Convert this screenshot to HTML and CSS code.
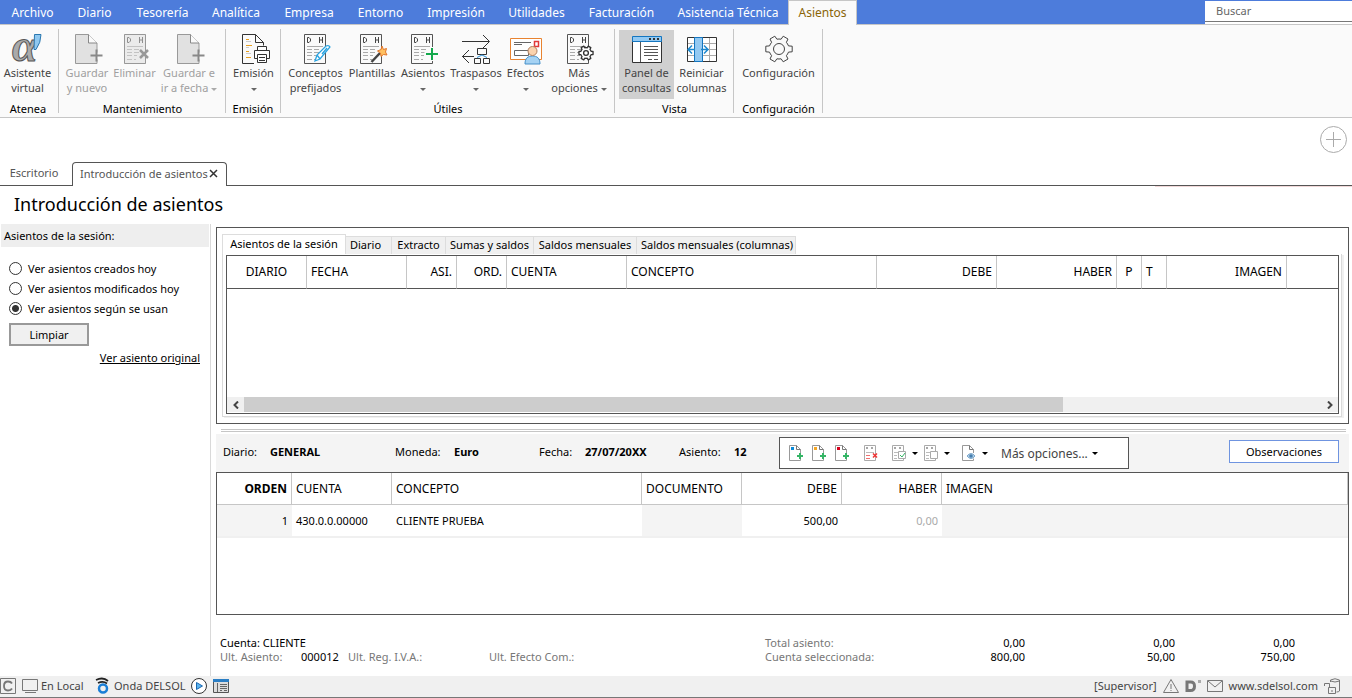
FILE: index.html
```html
<!DOCTYPE html>
<html lang="es">
<head>
<meta charset="utf-8">
<title>Introducción de asientos</title>
<link rel="stylesheet" href="styles.css">
</head>
<body>
<svg class="defs" aria-hidden="true">
  <defs>
    <g id="dh" fill="none">
      <path d="M.5.5h21v29H.5z" fill="#fafafa" stroke="#555"/>
      <path d="M3.5 3.500v5M3.500 3.500h1.500l1.500 1.500v2l-1.500 1.500H3.500M15.500 3v6M18.500 3v6M15.500 6h3" stroke="#444"/>
      <path d="M3 12.500h16M3 15.500h5M3 18.500h5M3 21.500h5M3 25.500h5M10 15.500h5M10 18.500h5M10 21.500h3M10 25.500h2" stroke="#aaa"/>
    </g>
    <g id="doc" fill="none">
      <path d="M22 18.500V9L13.500.5H.5v29H22v-4" fill="#e1e1e1" stroke="#999"/>
      <path d="M13.500.5V9H22" fill="#fafafa" stroke="#888"/>
      <path d="M21.500 15.500v12M15.500 21.500h12" stroke="#888" stroke-width="2"/>
    </g>
    <path id="gear" stroke-linejoin="round" d="M23.500 10.900l3.700.3v5.600l-3.700.3q-.8 2-2.100 3.600L23 24l-4.800 2.800-2.100-3q-2.100.4-4.200 0l-2.100 3L5 24l1.600-3.300q-1.300-1.600-2.100-3.600l-3.700-.3v-5.600l3.700-.3q.8-2 2.100-3.600L5 4l4.800-2.800 2.100 3q2.100-.4 4.200 0l2.100-3L23 4l-1.600 3.300q1.300 1.600 2.100 3.600z"/>
    <g id="sdoc" fill="none">
      <path d="M11.500 8V4.500l-4-4h-7v15h11v-2" fill="#fff" stroke="#999"/>
      <path d="M7.500.5v4h4" stroke="#777"/>
    </g>
    <g id="sgrid" fill="none">
      <path d="M.5.5h11v15H.5z" fill="#fff" stroke="#aaa"/>
      <path d="M2.500 2.500h1v1h-1zM7.500 2.500h1v1h-1z" stroke="#888"/>
      <path d="M2 7.500h8M2 10.500h3M2 13.500h3" stroke="#bbb"/>
    </g>
  </defs>
</svg>

<header>
  <nav class="menu">
    <button>Archivo</button><button>Diario</button><button>Tesorería</button><button>Analítica</button><button>Empresa</button><button>Entorno</button><button>Impresión</button><button>Utilidades</button><button>Facturación</button><button>Asistencia Técnica</button><button class="current">Asientos</button>
    <div class="find"><input class="search" type="text" placeholder="Buscar" aria-label="Buscar"></div>
  </nav>

  <div class="ribbon">
    <section class="group g-atenea">
      <div class="tools">
        <button><svg class="logo" width="32" height="32" viewBox="0 0 32 32"><text x="0" y="28" class="alpha">α</text><path d="M22.500 1.500h6.500q0 8-5 15h-2z" fill="#8fc8f0" stroke="#2b78b0"/></svg><span>Asistente<br>virtual</span></button>
      </div>
      <h2>Atenea</h2>
    </section>
    <section class="group g-mant">
      <div class="tools">
        <button disabled><svg class="sheet" width="28" height="32" viewBox="0 0 28 32"><use href="#doc" y="1"/></svg><span>Guardar<br>y nuevo</span></button>
        <button disabled><svg class="sheet" width="25" height="32" viewBox="0 0 25 32"><path d="M0 1h22v30H0z" fill="#ddd"/><use href="#dh" y="1" opacity=".5"/><path d="M16 17l8 8M24 17l-8 8" stroke="#999" stroke-width="2.500"/></svg><span>Eliminar</span></button>
        <button disabled><svg class="sheet" width="28" height="32" viewBox="0 0 28 32"><use href="#doc" y="1"/></svg><span>Guardar e<br>ir a fecha <i class="caret"></i></span></button>
      </div>
      <h2>Mantenimiento</h2>
    </section>
    <section class="group g-emision">
      <div class="tools">
        <button><svg class="sheet" width="28" height="32" viewBox="0 0 28 32" fill="none"><path d="M12 30.500H.5v-29h13l8 8v3M13.500 1.500v8h8" stroke="#333"/><path d="M4 6.500h3M4 12.500h6M4 18.500h3M4 24.500h5" stroke="#e8a020"/><path d="M4 8.500h5M4 14.500h3M4 20.500h5" stroke="#ccc"/><path d="M12.500 25.500v-8h15v8h-3M15.500 17.500v-4h9v4M15.500 21.500h9v8h-9zM17 24.500h6M17 27.500h6M12.500 25.500h3" stroke="#333" fill="#fff"/></svg><span>Emisión<br><i class="caret"></i></span></button>
      </div>
      <h2>Emisión</h2>
    </section>
    <section class="group g-utiles">
      <div class="tools">
        <button><svg class="sheet" width="28" height="32" viewBox="0 0 28 32"><use href="#dh" y="1"/><path d="M11 28l2-6 9-9q3-1 4 1l-10 12zM13 22l3 4M18 21l5-6" fill="#fff" stroke="#29a3e0" stroke-width="1.300"/></svg><span>Conceptos<br>prefijados</span></button>
        <button><svg class="sheet" width="28" height="32" viewBox="0 0 28 32"><use href="#dh" y="1"/><path d="M11.500 29L20 20" stroke="#444" stroke-width="2.500"/><path d="M22 13l1.500 3.500 3-1-1 3.500 1.500 3-3.500-.5-2.500 2-.5-3.500-3-2 3.500-1.500z" fill="#ffc060" stroke="#e2762b"/></svg><span>Plantillas</span></button>
        <button><svg class="sheet" width="28" height="32" viewBox="0 0 28 32"><use href="#dh" y="1"/><path d="M20.500 14v14M13.500 21h14" stroke="#fafafa" stroke-width="4"/><path d="M21 15v12M15 21h12" stroke="#14a84c" stroke-width="2"/></svg><span>Asientos<br><i class="caret"></i></span></button>
        <button><svg width="30" height="32" viewBox="0 0 30 32" fill="none" stroke="#333"><path d="M1 8.500h27M22 2l6.500 6.500L22 15M13 23.500H1M8 17l-6.500 6.500L8 30"/><path d="M16.500 15.500h9v6h-9zM13.500 25.500h6v5h-6zM22.500 25.500h6v5h-6z" fill="#fafafa"/><path d="M16 24.500l5-2.500 5 2.500" stroke="#2b8fd6"/></svg><span>Traspasos<br><i class="caret"></i></span></button>
        <button><svg width="32" height="32" viewBox="0 0 32 32" fill="none"><path d="M.5 5.500h31v21H.5z" fill="#fff" stroke="#e88330"/><path d="M4 9.500h17M4 11.500h8M4.500 17.500h14v5h-14z" stroke="#666"/><path d="M24.500 8.500h4v5h-4z" stroke="#e23838" stroke-width="1.500"/><path d="M15 31c0-6 3-8 7.500-8s7.500 2 7.500 8z" fill="#a5d2f3" stroke="#4690c8"/><circle cx="22.500" cy="18" r="4.500" fill="#fbd3ae" stroke="#b08060"/></svg><span>Efectos<br><i class="caret"></i></span></button>
        <button><svg class="sheet" width="28" height="32" viewBox="0 0 28 32"><use href="#dh" y="1"/><svg x="11" y="12" width="16" height="16" viewBox="-1 -1 30 30"><use href="#gear" fill="#fff" stroke="#333" stroke-width="2.500"/><circle cx="14" cy="14" r="4.500" fill="none" stroke="#333" stroke-width="2.500"/></svg></svg><span>Más<br>opciones <i class="caret"></i></span></button>
      </div>
      <h2>Útiles</h2>
    </section>
    <section class="group g-vista">
      <div class="tools">
        <button class="pressed"><svg width="30" height="32" viewBox="0 0 30 32" fill="none"><path d="M.5 4.500h29v25H.5z" fill="#fff" stroke="#333"/><path d="M.5 3.500h29v5H.5z" fill="#93c9f2" stroke="#1476c0"/><path d="M17 6h2M21 6h2M25 6h2" stroke="#333" stroke-width="2"/><path d="M8.500 9v20M12 13.500h14M12 16.500h14M12 19.500h14M12 22.500h14M16 26.500h4M22 26.500h4" stroke="#555"/></svg><span>Panel de<br>consultas</span></button>
        <button><svg width="30" height="32" viewBox="0 0 30 32" fill="none"><path d="M.5 4.500h29v24H.5z" fill="#fff"/><path d="M1 10.500h28M1 16.500h28M1 22.500h28M22.500 4v24" stroke="#aaa"/><path d="M.5 4.500h29v24H.5z" stroke="#333"/><path d="M7.500 4.500h8v24h-8z" fill="#93c9f2" stroke="#1476c0"/><path d="M2 16.500h6M5 12.500l-4 4 4 4M14 16.500h7M17 12.500l4 4-4 4" stroke="#1c87cd" stroke-width="1.500"/></svg><span>Reiniciar<br>columnas</span></button>
      </div>
      <h2>Vista</h2>
    </section>
    <section class="group g-conf">
      <div class="tools">
        <button><svg width="28" height="32" viewBox="0 0 28 32" fill="none" stroke="#444"><use href="#gear" y="2"/><circle cx="14" cy="16" r="5.500"/></svg><span>Configuración</span></button>
      </div>
      <h2>Configuración</h2>
    </section>
  </div>
</header>

<div class="desktop">
  <button class="add" aria-label="Añadir"><svg width="27" height="27" viewBox="0 0 27 27" fill="none" stroke="#aaa"><circle cx="13.500" cy="13.500" r="13"/><path d="M13.500 6v15M6 13.500h15"/></svg></button>
</div>
<nav class="windows">
  <button>Escritorio</button>
  <button class="current">Introducción de asientos <svg width="9" height="9" viewBox="0 0 9 9" stroke="#333" stroke-width="1.500"><path d="M1 1l7 7M8 1L1 8"/></svg></button>
  <span class="rest"></span><span class="rest accent"></span>
</nav>
<h1>Introducción de asientos</h1>

<div class="work">
  <aside>
    <h3>Asientos de la sesión:</h3>
    <div class="choices">
      <label><input type="radio" name="ver">Ver asientos creados hoy</label>
      <label><input type="radio" name="ver">Ver asientos modificados hoy</label>
      <label><input type="radio" name="ver" checked>Ver asientos según se usan</label>
    </div>
    <button class="clear">Limpiar</button>
    <a href="#original">Ver asiento original</a>
  </aside>

  <main>
    <section class="session">
      <nav class="subtabs">
        <button class="current">Asientos de la sesión</button><button>Diario</button><button>Extracto</button><button>Sumas y saldos</button><button>Saldos mensuales</button><button>Saldos mensuales (columnas)</button>
      </nav>
      <div class="frame">
        <div class="listing">
          <table>
            <colgroup><col class="w80"><col class="w100"><col class="w50"><col class="w50"><col class="w120"><col class="w250"><col class="w120"><col class="w120"><col class="w25"><col class="w25"><col class="w120"><col></colgroup>
            <thead><tr><th class="mid">DIARIO</th><th>FECHA</th><th class="num">ASI.</th><th class="num">ORD.</th><th>CUENTA</th><th>CONCEPTO</th><th class="num">DEBE</th><th class="num">HABER</th><th class="mid">P</th><th>T</th><th class="num">IMAGEN</th><th></th></tr></thead>
          </table>
          <div class="scroll">
            <button aria-label="Izquierda"><svg width="6" height="8" viewBox="0 0 6 8" fill="none" stroke="#444" stroke-width="2"><path d="M5 .5L1.500 4 5 7.500"/></svg></button>
            <div class="track"><div class="thumb"></div></div>
            <button aria-label="Derecha"><svg width="6" height="8" viewBox="0 0 6 8" fill="none" stroke="#444" stroke-width="2"><path d="M1 .5L4.500 4 1 7.500"/></svg></button>
          </div>
        </div>
      </div>
    </section>
    <div class="splitter"></div>

    <section class="entry">
      <div class="bar">
        <dl>
          <dt>Diario:</dt><dd>GENERAL</dd>
          <dt>Moneda:</dt><dd>Euro</dd>
          <dt>Fecha:</dt><dd>27/07/20XX</dd>
          <dt>Asiento:</dt><dd>12</dd>
        </dl>
        <div class="actions">
          <button aria-label="Nuevo apunte"><svg width="16" height="16" viewBox="0 0 16 16"><use href="#sdoc"/><path d="M2 2h3v3H2z" fill="#0a8ad8"/><path d="M11 8v6M8 11h6" stroke="#35b566" stroke-width="2"/></svg></button>
          <button aria-label="Insertar apunte"><svg width="16" height="16" viewBox="0 0 16 16"><use href="#sdoc"/><path d="M2 2h3v3H2z" fill="#f5a623"/><path d="M11 8v6M8 11h6" stroke="#35b566" stroke-width="2"/></svg></button>
          <button aria-label="Duplicar apunte"><svg width="16" height="16" viewBox="0 0 16 16"><use href="#sdoc"/><path d="M2 2h3v3H2z" fill="#d8001c"/><path d="M11 8v6M8 11h6" stroke="#35b566" stroke-width="2"/></svg></button>
          <button class="a-del" aria-label="Eliminar apunte"><svg width="16" height="16" viewBox="0 0 16 16"><use href="#sgrid"/><path d="M2 10.500h4M2 13.500h4" stroke="#f07070"/><path d="M9 8.500l4 4M13 8.500l-4 4" stroke="#e33" stroke-width="1.500"/></svg></button>
          <button class="a-wide" aria-label="Marcar"><svg width="16" height="16" viewBox="0 0 16 16"><use href="#sgrid"/><path d="M6.500 6.500h7v7h-7z" fill="#fff" stroke="#aaa"/><path d="M8 10l2 2 3-4" fill="none" stroke="#35b566"/></svg><i class="caret"></i></button>
          <button class="a-wide" aria-label="Desmarcar"><svg width="16" height="16" viewBox="0 0 16 16"><use href="#sgrid"/><path d="M6.500 6.500h7v7h-7z" fill="#fff" stroke="#aaa"/></svg><i class="caret"></i></button>
          <button class="a-view" aria-label="Ver documento"><svg width="16" height="16" viewBox="0 0 16 16"><use href="#sdoc"/><path d="M5 11q4-5 8 0-4 5-8 0z" fill="#b7d3ea" stroke="#7ba7cc"/><circle cx="9" cy="11" r="1.800" fill="#477eae"/></svg><i class="caret"></i></button>
          <button class="a-more">Más opciones... <i class="caret"></i></button>
        </div>
        <button class="notes">Observaciones</button>
      </div>
      <div class="lines">
        <table>
          <colgroup><col class="w75"><col class="w100"><col class="w250"><col class="w100"><col class="w100"><col class="w100"><col></colgroup>
          <thead><tr><th class="num strong">ORDEN</th><th>CUENTA</th><th>CONCEPTO</th><th>DOCUMENTO</th><th class="num">DEBE</th><th class="num">HABER</th><th>IMAGEN</th></tr></thead>
          <tbody><tr><td class="num off">1</td><td>430.0.0.00000</td><td>CLIENTE PRUEBA</td><td class="off"></td><td class="num">500,00</td><td class="num zero">0,00</td><td class="off"></td></tr></tbody>
        </table>
      </div>
    </section>

    <section class="totals">
      <div class="account">
        <p>Cuenta: CLIENTE</p>
        <p class="last"><span>Ult. Asiento:</span><b>000012</b><span>Ult. Reg. I.V.A.:</span><span>Ult. Efecto Com.:</span></p>
      </div>
      <table>
        <tbody>
          <tr><th>Total asiento:</th><td>0,00</td><td>0,00</td><td>0,00</td></tr>
          <tr><th>Cuenta seleccionada:</th><td>800,00</td><td>50,00</td><td>750,00</td></tr>
        </tbody>
      </table>
    </section>
  </main>
</div>

<footer>
  <div class="side">
    <svg width="16" height="16" viewBox="0 0 16 16" fill="none"><path d="M.5.5h15v15H.5z" stroke="#777"/><path d="M12 5.500q-1-2-4-2-4 0-4 4.500t4 4.500q3 0 4-2" stroke="#777" stroke-width="1.800"/></svg>
    <svg class="s-screen" width="16" height="16" viewBox="0 0 16 16" fill="none" stroke="#777"><path d="M.5 1.500h15v11H.5zM3 14.500h11"/></svg>
    <span class="s-local">En Local</span>
    <svg width="16" height="17" viewBox="0 0 16 17" fill="none"><path d="M1 3q7-3.500 12 1M3 6q5-2.500 9 .5" stroke="#222" stroke-width="1.800"/><circle cx="8" cy="11.500" r="4" stroke="#1b7fd6" stroke-width="2.500"/></svg>
    <span class="s-onda">Onda DELSOL</span>
    <svg width="16" height="16" viewBox="0 0 16 16"><circle cx="8" cy="8" r="7.500" fill="#fff" stroke="#333"/><path d="M5.500 4.500l6 3.500-6 3.500z" fill="#5bb3ee" stroke="#1b68b0"/></svg>
    <svg class="s-panel" width="16" height="16" viewBox="0 0 16 16" fill="none"><path d="M.5 2.500h15v12H.5z" fill="#ddd" stroke="#555"/><path d="M0 1h16v3H0z" fill="#2b7ec4"/><path d="M4.500 5v9M7 6.500h7M7 8.500h7M7 10.500h7M7 12.500h2M11 12.500h3" stroke="#666"/></svg>
  </div>
  <div class="side">
    <span>[Supervisor]</span>
    <svg class="f-gap" width="16" height="16" viewBox="0 0 16 16" fill="none" stroke="#777"><path d="M8 1.500L15.500 14.500H.5zM8 6v5M8 12v1"/></svg>
    <svg class="f-gap" width="16" height="16" viewBox="0 0 16 16" fill="none"><path d="M2 4v8.500h3.500q4 0 4-4.300T5.500 4z" stroke="#777" stroke-width="3"/><path d="M13 2h3v3h-3z" fill="#aaa"/></svg>
    <svg class="f-gap" width="16" height="16" viewBox="0 0 16 16" fill="none" stroke="#777"><path d="M.5 2.500h15v11H.5zM1 3l7 6 7-6"/></svg>
    <a class="f-gap" href="#web">www.sdelsol.com</a>
    <svg class="f-gap" width="16" height="16" viewBox="0 0 16 16" fill="none" stroke="#777"><path d="M6.500 4V2q4.500-2.500 9 0v11q-1 1-3 1M6.500 3q4.500 2 9 0M4.500 9.500h7v6h-7zM.5 8V5.500h5v4M8 12v2"/></svg>
  </div>
</footer>
</body>
</html>
```
FILE: styles.css
```css
* { box-sizing: border-box; }

body {
  margin: 0;
  min-height: 100vh;
  display: flex;
  flex-direction: column;
  background: #fff;
  color: #000;
  font-family: "Noto Sans", "Open Sans", sans-serif;
  font-size: 11px;
  line-height: 15px;
}

button, input {
  margin: 0;
  padding: 0;
  border: 0;
  background: none;
  color: inherit;
  font: inherit;
  white-space: nowrap;
}

h1, h2, h3, p, dl, dd { margin: 0; font-weight: 400; }
svg { display: block; flex: none; }
a { color: inherit; }
table { border-collapse: separate; border-spacing: 0; }
.defs { position: absolute; width: 0; height: 0; }

.caret {
  display: inline-block;
  vertical-align: middle;
  border: 3px solid transparent;
  border-top-color: currentColor;
  border-bottom: 0;
}

/* Menu bar */
.menu {
  display: grid;
  grid-template-columns: 62px 62px 74px 73px 73px 70px 81px 80px 90px 123px 69px 1fr;
  height: 25px;
  background: #4d7cdb;
  border-bottom: 1px solid #c6c6c6;
  color: #fff;
  font-size: 12px;
}
.menu button { padding-left: 3px; }
.menu .current {
  height: 25px;
  padding: 0 0 1px;
  border: 1px solid #c6c6c6;
  border-bottom: 0;
  background: #fafafa;
  color: #8a6508;
}
.find {
  justify-self: end;
  width: 147px;
  height: 24px;
  border-top: 1px solid #4d7cdb;
  background: #fff;
}
.search {
  display: block;
  width: 100%;
  height: 21px;
  padding: 0 11px 2px;
  border-bottom: 1px solid #777;
  font-size: 11px;
}
.search::placeholder { color: #666; opacity: 1; }

/* Ribbon */
.ribbon {
  display: flex;
  height: 93px;
  padding: 4px 0;
  background: #fafafa;
  border-bottom: 1px solid #c6c6c6;
}
.group {
  display: flex;
  flex-direction: column;
  justify-content: space-between;
  padding-left: 3px;
  border-right: 1px solid #c6c6c6;
}
.tools { display: flex; height: 70px; padding-top: 1px; }
.tools button {
  display: flex;
  flex-direction: column;
  align-items: center;
  padding-top: 3px;
  color: #444;
}
.tools button:disabled { color: #a0a0a0; }
.tools .pressed { background: #d0d0d0; }
.tools .caret { border-top-color: #666; }
.tools :disabled .caret { border-top-color: #aaa; }
.sheet { margin-left: 4px; }
.group h2 { margin-right: 2px; font-size: 11px; line-height: 8px; text-align: center; }
.g-atenea { width: 59px; padding-left: 0; }
.g-atenea button { width: 55px; }
.g-mant { width: 167px; }
.g-mant button { width: 64px; }
.g-mant button:first-child { width: 50px; }
.g-mant button:nth-child(2) { width: 45px; }
.g-emision { width: 55px; padding-left: 2px; }
.g-emision button { width: 51px; }
.g-utiles { width: 334px; }
.g-utiles .tools { display: grid; grid-template-columns: 63px 50px 52px 54px 45px 62px; }
.g-vista { width: 119px; }
.g-vista .tools { padding-left: 1px; }
.g-vista button { width: 55px; }
.g-conf { width: 89px; }
.g-conf button { width: 83px; }
.logo { overflow: visible; }
.alpha { font: italic 700 46px "Liberation Serif", serif; fill: #aaa; stroke: #555; }

/* Window tabs */
.desktop { display: flex; justify-content: flex-end; height: 44px; padding: 8px 5px; }
.add { width: 27px; height: 27px; }
.windows { display: flex; height: 24px; color: #555; }
.windows button { width: 72px; padding: 0 4px 2px 0; border-bottom: 1px solid #555; }
.windows .current {
  display: flex;
  align-items: center;
  justify-content: space-between;
  width: 155px;
  padding: 0 8px 3px 7px;
  border: 1px solid #555;
  border-bottom: 0;
  border-radius: 4px 4px 0 0;
}
.rest { flex: 1; border-bottom: 1px solid #555; }
.windows .accent { flex: 0 0 197px; box-shadow: 0 1px #f0d8d8; }
h1 { padding: 4px 14px 6px; font-size: 18px; line-height: 28px; }

/* Work area */
.work { flex: 1; display: flex; }
aside {
  display: flex;
  flex-direction: column;
  flex: none;
  width: 211px;
  border-right: 1px solid #d9d9d9;
  padding-right: 1px;
}
h3 { margin-left: 1px; padding: 4px 3px; background: #eee; font-size: 11px; }
.choices { display: grid; gap: 5px; padding: 14px 9px 0; }
.choices label { display: flex; align-items: center; gap: 6px; }
.choices input {
  appearance: none;
  width: 13px;
  height: 13px;
  border: 1px solid #333;
  border-radius: 50%;
  background: #fff;
}
.choices input:checked { background: radial-gradient(circle, #333 3px, #fff 4px); }
.clear {
  width: 80px;
  height: 23px;
  margin: 7px 9px 4px;
  border: 2px solid #999;
  background: #f0f0f0;
}
aside a { align-self: flex-end; margin-right: 9px; }

main { flex: 1; min-width: 0; display: flex; flex-direction: column; padding: 3px 3px 0 5px; }
.session { padding: 6px 6px 6px 5px; border: 1px solid #555; }
.subtabs { display: flex; align-items: flex-end; height: 20px; }
.subtabs button {
  height: 18px;
  padding: 0 4px 2px;
  background: #f0f0f0;
  border: 1px solid #ddd;
  border-left: 0;
  border-bottom: 0;
}
.subtabs button:nth-child(1) { height: 20px; width: 124px; padding-bottom: 3px; background: #fff; border-left: 1px solid #ddd; }
.subtabs button:nth-child(2) { width: 46px; text-align: left; }
.subtabs button:nth-child(3) { width: 54px; }
.subtabs button:nth-child(4) { width: 88px; }
.subtabs button:nth-child(5) { width: 103px; }
.subtabs button:nth-child(6) { width: 159px; }
.frame { padding: 1px 2px 2px 3px; border: 1px solid #d9d9d9; border-top: 0; box-shadow: 2px 1px #f0f0f0; }
.listing {
  display: flex;
  flex-direction: column;
  justify-content: space-between;
  height: 159px;
  padding-bottom: 1px;
  border: 1px solid #555;
}

main table { table-layout: fixed; width: 100%; }
th, td { padding: 0 4px; text-align: left; font-weight: 400; white-space: nowrap; }
thead th { height: 32px; border-right: 1px solid #c6c6c6; border-bottom: 1px solid #c6c6c6; font-size: 12px; }
.listing th { height: 33px; padding-bottom: 2px; border-bottom-color: #555; }
.listing th:last-child { border-right: 0; }
main .num { text-align: right; }
main .mid { text-align: center; }
main .strong { font-weight: 700; }
.w25 { width: 25px; }
.w50 { width: 50px; }
.w75 { width: 75px; }
.w80 { width: 80px; }
.w100 { width: 100px; }
.w120 { width: 120px; }
.w250 { width: 250px; }

.scroll { display: flex; height: 15px; background: #f0f0f0; }
.scroll button { display: grid; place-items: center; width: 17px; }
.track { flex: 1; }
.thumb { width: 76%; height: 15px; background: #cdcdcd; }
.splitter { height: 3px; margin: 5px 3px 2px 5px; border: 1px solid #c6c6c6; border-width: 1px 0; }

/* Entry */
.bar {
  display: flex;
  align-items: flex-start;
  height: 38px;
  padding: 3px 10px 0 0;
  background: #f4f4f4;
}
dl {
  display: grid;
  grid-template-columns: 47px 125px 59px 85px 46px 94px 55px 45px;
  margin-top: 7px;
  padding-left: 7px;
}
dd { font-weight: 700; }
.actions {
  display: flex;
  align-items: center;
  width: 350px;
  height: 32px;
  padding-left: 9px;
  border: 1px solid #555;
  background: #fff;
}
.actions button { display: flex; align-items: center; gap: 4px; width: 23px; color: #000; }
.actions .a-del { width: 28px; margin-left: 6px; }
.actions .a-wide { width: 32px; }
.actions .a-view { width: 39px; margin-left: 6px; }
.actions .a-more { width: auto; color: #444; font-size: 12px; }
.actions .caret { border-top-color: #000; }
.notes { width: 110px; height: 23px; margin: 3px 0 0 auto; border: 1px solid #6f94e0; background: #fff; }
.lines { height: 143px; border: 1px solid #555; }
tbody td { height: 33px; border-bottom: 2px solid #f0f0f0; }
.off { background: #f4f4f4; }
.zero { color: #aaa; }

/* Totals */
.totals { display: flex; padding: 21px 0 0 4px; line-height: 14px; }
.account { width: 545px; }
.last { display: grid; grid-template-columns: 81px 47px 141px 1fr; color: #777; }
.last b { color: #000; font-weight: 400; }
.totals table { width: 530px; }
.totals th, .totals td { height: 14px; padding: 0; border: 0; }
.totals th { width: 160px; color: #777; }
.totals td { text-align: right; }
.totals td:nth-child(2) { width: 100px; }
.totals td:nth-child(3) { width: 150px; }

/* Status bar */
footer {
  display: flex;
  justify-content: space-between;
  height: 22px;
  padding: 0 12px 2px 0;
  background: #f0f0f0;
  border-bottom: 1px solid #777;
  color: #444;
}
.side { display: flex; align-items: center; }
.side a { text-decoration: none; }
.s-screen { margin: 0 3px 0 6px; }
.s-local { width: 54px; }
.s-onda { width: 77px; margin-left: 3px; }
.s-panel { margin-left: 6px; }
.f-gap { margin-left: 6px; }
```
